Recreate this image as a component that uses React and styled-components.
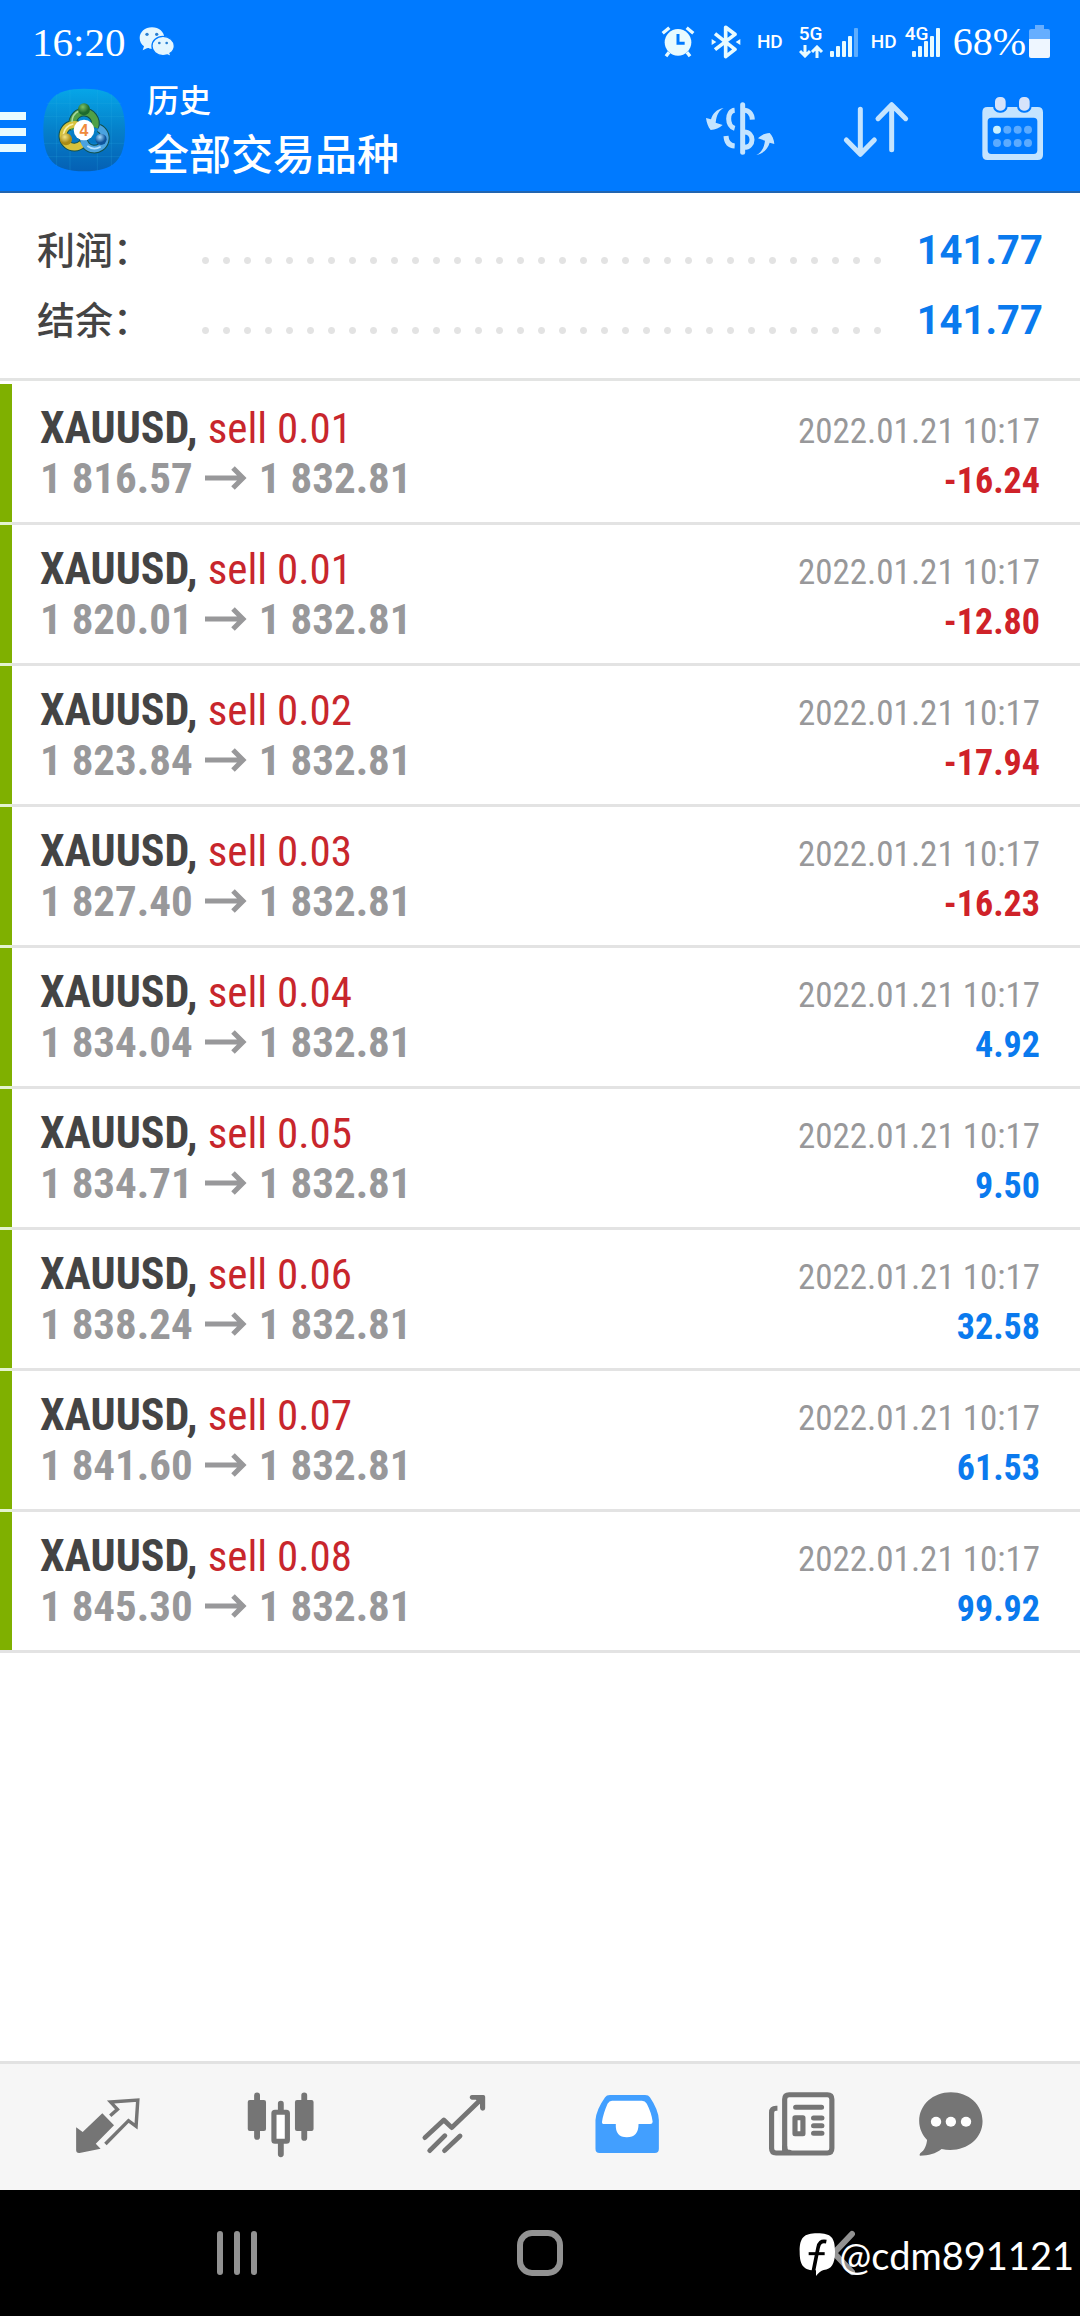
import React from "react";
import styled, { createGlobalStyle } from "styled-components";

const condensed = `"Roboto Condensed", "Liberation Sans Narrow", Roboto, sans-serif`;
const cjk = `Roboto, "Noto Sans CJK SC", sans-serif`;

const GlobalStyle = createGlobalStyle`
  *, *::before, *::after { box-sizing: border-box; }
  body { margin: 0; background: #fff; font-family: ${cjk}; }
  h1, p, ul, dl, dd { margin: 0; padding: 0; }
  ul { list-style: none; }
  button { border: 0; padding: 0; background: none; font: inherit; color: inherit; cursor: pointer; }
  svg { display: block; flex: none; }
`;

const Screen = styled.div`
  display: flex;
  flex-direction: column;
  min-height: 100vh;
`;

const Header = styled.header`
  background: #007aff;
  border-bottom: 2px solid #2265b0;
  color: #fff;
`;

const StatusBar = styled.div`
  display: flex;
  align-items: center;
  justify-content: space-between;
  height: 69px;
  padding: 14px 30px 0 32px;
`;

const StatusGroup = styled.div`
  display: flex;
  align-items: center;
  gap: ${(p) => p.$gap}px;
`;

const StatusText = styled.span`
  font-family: "Liberation Serif", serif;
  font-size: ${(p) => p.$size}px;
  line-height: 48px;
`;

const Tag = styled.span`
  font-size: 19px;
  font-weight: 500;
  line-height: 20px;
`;

const Network = styled.span`
  position: relative;
  display: flex;
  align-items: flex-end;
  height: 32px;
  padding-left: ${(p) => p.$inset}px;
`;

const NetworkLabel = styled.span`
  position: absolute;
  top: 0;
  left: 0;
  font-size: 19px;
  font-weight: 500;
  line-height: 16px;
`;

const AppBar = styled.div`
  display: flex;
  align-items: center;
  height: 122px;
`;

const MenuButton = styled.button`
  display: flex;
  flex-direction: column;
  gap: 8px;
  width: 42px;
  padding-top: 4px;
`;

const MenuLine = styled.span`
  width: 26px;
  height: 8px;
  background: #e8fbff;
`;

const Titles = styled.div`
  flex: 1;
  margin-left: 21px;
  padding-top: 4px;
`;

const Caption = styled.p`
  font-size: 32px;
  font-weight: 500;
  line-height: 48px;
`;

const Title = styled.h1`
  font-size: 42px;
  font-weight: 500;
  line-height: 62px;
`;

const ActionButton = styled.button`
  display: flex;
  justify-content: center;
  width: 136px;
`;

const Summary = styled.dl`
  padding: 23px 37px 22px;
  border-bottom: 3px solid #e3e4e3;
`;

const SummaryRow = styled.div`
  display: flex;
  align-items: center;
  height: 70px;
`;

const SummaryLabel = styled.dt`
  flex: 1;
  display: flex;
  align-items: center;
  color: #444;
  font-size: 38px;
  font-weight: 500;
  line-height: 56px;

  &::after {
    content: "";
    flex: 1;
    height: 25px;
    background: radial-gradient(circle, #e3e3e3 3px, transparent 4px) left bottom / 21px 7px;
    background-repeat: round no-repeat;
  }
`;

const LabelText = styled.span`
  width: 158px;
`;

const SummaryValue = styled.dd`
  width: 155px;
  color: #0a7aee;
  font-size: 40px;
  font-weight: 700;
  line-height: 56px;
  text-align: right;
`;

const Deals = styled.ul`
  flex: 1;
  padding-top: 3px;
`;

const Deal = styled.li`
  display: flex;
  background: #e4f3cf;

  &:last-child { background: #e3e3e3; }
`;

const DealMark = styled.span`
  width: 12px;
  margin-bottom: 3px;
  background: #7fb000;
`;

const DealBody = styled.div`
  flex: 1;
  padding: 19px 40px 19px 28px;
  border-bottom: 3px solid #e3e3e3;
  background: #fff;
  font-family: ${condensed};
`;

const DealLine = styled.div`
  display: flex;
  align-items: baseline;
  justify-content: space-between;
  height: 50px;
  line-height: 50px;
`;

const Symbol = styled.span`
  color: #444;
  font-size: 44px;
  font-weight: 700;
`;

const Side = styled.span`
  color: #c8262c;
  font-size: 43px;
  font-weight: 400;
`;

const Prices = styled.span`
  display: flex;
  align-items: center;
  gap: 12px;
  color: #98989a;
  font-size: 43px;
  font-weight: 700;
`;

const Time = styled.time`
  color: #98989a;
  font-size: 35px;
`;

const Profit = styled.span`
  color: ${(p) => (p.$loss ? "#cf2229" : "#0a7aee")};
  font-size: 36px;
  font-weight: 700;
`;

const TabBar = styled.nav`
  display: grid;
  grid-template-columns: repeat(5, 173fr) 128fr;
  height: 129px;
  padding: 0 66px 0 21px;
  border-top: 3px solid #e2e2e2;
  background: #f6f6f6;
`;

const TabButton = styled.button`
  display: flex;
  align-items: center;
  justify-content: center;
  color: ${(p) => (p.$active ? "#429fff" : "#757575")};
`;

const SystemBar = styled.footer`
  position: relative;
  display: grid;
  grid-template-columns: repeat(3, 1fr);
  height: 126px;
  padding: 0 86px;
  background: #000;
  color: #929292;
`;

const SystemButton = styled.button`
  display: flex;
  align-items: center;
  justify-content: center;
`;

const Watermark = styled.div`
  position: absolute;
  right: 6px;
  bottom: 37px;
  display: flex;
  align-items: center;
  gap: 4px;
  color: #fff;
  font-family: Lato, sans-serif;
  font-size: 38px;
  line-height: 48px;
`;

const WeChatIcon = () => (
  <svg width="36" height="32" viewBox="416 74 108 96" fill="#e4f6ff">
    <path d="M455 78c-21 0-37 14-37 32 0 10 5 19 13 25l-4 12 14-7c4 2 9 2 14 2 21 0 37-14 37-32s-16-32-37-32z" />
    <path stroke="#007aff" strokeWidth="4" d="M488 105c-19 0-33 13-33 29s14 29 33 29c5 0 9-1 13-2l12 5-4-10c8-5 13-13 13-22 0-16-15-29-34-29z" />
    <g fill="#2a7fd0">
      <circle cx="440" cy="99" r="5" /><circle cx="469" cy="99" r="5" />
      <circle cx="477" cy="125" r="4" /><circle cx="499" cy="125" r="4" />
    </g>
  </svg>
);

const AlarmIcon = () => (
  <svg width="34" height="34" viewBox="60 71 102 102" stroke="#e8fbff" fill="none">
    <circle cx="111" cy="123" r="40" fill="#e8fbff" stroke="none" />
    <path strokeWidth="10" d="M65 96l20-17M137 79l20 17M84 153l-9 12M138 153l9 12" />
    <path stroke="#007aff" strokeWidth="9" d="M111 98v28h20" />
  </svg>
);

const BluetoothIcon = () => (
  <svg width="30" height="34" viewBox="205 71 90 102" stroke="#e8fbff" strokeWidth="11" fill="none" strokeLinejoin="round">
    <path d="M217 97l60 47-28 22V78l28 21-60 46" />
    <path fill="#e8fbff" stroke="none" d="M207 113l14 9-14 9zM293 113l-14 9 14 9z" />
  </svg>
);

const SignalBars = ({ faded }) => (
  <svg width="29" height="30" viewBox="0 0 29 30" fill="#e8fbff">
    <rect x="0" y="23" width="4" height="6" rx="1" />
    <rect x="6" y="18" width="4" height="11" rx="1" />
    <rect x="12" y="13" width="4" height="16" rx="1" />
    <rect x="18" y="8" width="4" height="21" rx="1" />
    <rect x="24" y="0" width="4" height="29" rx="1" opacity={faded ? 0.4 : 1} />
  </svg>
);

const DataArrows = () => (
  <svg width="31" height="13" viewBox="0 0 31 13" stroke="#e8fbff" strokeWidth="3" fill="none">
    <path d="M6 0v11M1 6l5 5 5-5M18 13V2M13 7l5-5 5 5" />
  </svg>
);

const BatteryIcon = () => (
  <svg width="21" height="33" viewBox="0 0 21 33">
    <path fill="#66aeff" d="M6 0h9v4h4a2 2 0 0 1 2 2v9H0V6a2 2 0 0 1 2-2h4z" />
    <path fill="#eef6ff" d="M0 14h21v17a2 2 0 0 1-2 2H2a2 2 0 0 1-2-2z" />
  </svg>
);

const AppLogo = () => (
  <svg width="84" height="84" viewBox="126 264 252 252">
    <defs>
      <linearGradient id="tile" x1="0" y1="0" x2="0" y2="1">
        <stop offset="0" stopColor="#06a6e8" /><stop offset=".5" stopColor="#0580ca" /><stop offset="1" stopColor="#0560b4" />
      </linearGradient>
      <radialGradient id="green" cx=".4" cy=".3"><stop offset="0" stopColor="#7cc065" /><stop offset="1" stopColor="#1d6b2e" /></radialGradient>
      <radialGradient id="gold" cx=".4" cy=".3"><stop offset="0" stopColor="#f5e684" /><stop offset="1" stopColor="#a88a14" /></radialGradient>
      <radialGradient id="azure" cx=".4" cy=".3"><stop offset="0" stopColor="#a5dcff" /><stop offset="1" stopColor="#0f559c" /></radialGradient>
    </defs>
    <path fill="url(#tile)" d="M252 266c90 0 123 34 123 124s-33 124-123 124-122-34-122-124 32-124 122-124z" />
    <path stroke="#2fb4e6" strokeOpacity=".3" strokeWidth="2" d="M170 282v216M210 268v244M292 268v244M334 282v216M140 310h224M132 350h240M132 430h240M140 470h224" />
    <g fill="none">
      <path stroke="#12514d" strokeWidth="26" d="M222 386a34 34 0 1 1 62-4M236 376a34 34 0 1 0 10 56M296 384a33 33 0 1 1-46 32" />
      <path stroke="#4fa046" strokeWidth="20" d="M222 386a34 34 0 1 1 62-4" />
      <path stroke="#d6c23c" strokeWidth="20" d="M236 376a34 34 0 1 0 10 56" />
      <path stroke="#4aa3e0" strokeWidth="20" d="M296 384a33 33 0 1 1-46 32" />
      <path stroke="#a9d79c" strokeWidth="5" d="M216 366a37 37 0 0 1 22-34" />
      <path stroke="#f7efa8" strokeWidth="5" d="M190 404a36 36 0 0 1 30-32" />
      <path stroke="#b4e0ff" strokeWidth="5" d="M262 438a36 36 0 0 0 40 2" />
    </g>
    <circle cx="252" cy="328" r="18" fill="url(#green)" />
    <circle cx="198" cy="418" r="18" fill="url(#gold)" />
    <circle cx="303" cy="418" r="17" fill="url(#azure)" />
    <circle cx="252" cy="390" r="31" fill="#fff" />
    <text x="252" y="407" textAnchor="middle" fontFamily="Liberation Sans, sans-serif" fontSize="48" fontWeight="700" fill="#f08a3c">4</text>
  </svg>
);

const ExchangeIcon = () => (
  <svg width="72" height="72" viewBox="192 282 216 216" fill="none" stroke="#c4e4ff" strokeWidth="15">
    <path strokeLinecap="round" d="M308 314v143" />
    <path d="M308 331c18-2 28 10 29 28M284 331c-24 2-24 48 0 54M312 396c32 0 32 46 0 46M258 408c1 18 10 29 26 30" />
    <path fill="#c4e4ff" stroke="none" d="M251 324c-14 7-21 20-24 44l21 7c-10 9-22 14-36 15-8-9-12-22-14-36l15 4c5-18 17-30 38-34zM349 465c15-7 23-21 26-43l-21-7c10-10 20-15 35-16 8 9 13 19 14 33l-14-4c-5 18-19 33-40 37z" />
  </svg>
);

const SortIcon = () => (
  <svg width="72" height="72" viewBox="600 282 216 216" fill="none" stroke="#c4e4ff" strokeWidth="15" strokeLinecap="round" strokeLinejoin="round">
    <path d="M661 328v133M619 420l42 43 42-43M755 449V315M714 356l41-42 42 42" />
  </svg>
);

const CalendarIcon = () => (
  <svg width="72" height="72" viewBox="1008 282 216 216">
    <path fill="#c4e4ff" fillRule="evenodd" d="M1042 321h151q16 0 16 16v128q0 15-16 15h-151q-15 0-15-15V337q0-16 15-16zm12 32q-11 0-11 11v87q0 11 11 11h127q11 0 11-11v-87q0-11-11-11z" />
    <g fill="#d6e3fa" stroke="#007aff" strokeWidth="6">
      <rect x="1062" y="288" width="38" height="47" rx="17" />
      <rect x="1134" y="288" width="38" height="47" rx="17" />
    </g>
    <g fill="#5cabff">
      {[1071, 1102, 1133, 1164].map((x) => (
        <React.Fragment key={x}>
          <circle cx={x} cy="389" r="12" fill={x === 1071 ? "#c8f0ff" : undefined} />
          <circle cx={x} cy="429" r="12" />
        </React.Fragment>
      ))}
    </g>
  </svg>
);

const PriceArrow = () => (
  <svg width="42" height="24" viewBox="0 0 42 24" fill="none" stroke="currentColor" strokeWidth="5">
    <path d="M0 12h39M28 2l10 10-10 10" />
  </svg>
);

const TabIcon = ({ x, children }) => (
  <svg width="72" height="72" viewBox={`${x} 123 209 216`} preserveAspectRatio="none" fill="currentColor" stroke="currentColor" strokeWidth="0" strokeLinejoin="round" strokeLinecap="round">
    {children}
  </svg>
);

const tabs = [
  {
    name: "行情",
    icon: (
      <TabIcon x={208}>
        <path d="M296 190l34 36-53 55 14 15-61 13q-10 1-10-9v-68l19 14z" />
        <path fill="none" strokeWidth="10" strokeLinecap="butt" strokeLinejoin="miter" d="M319 197l21-19-20-22 79-6-5 79-22-17-67 70" />
      </TabIcon>
    ),
  },
  {
    name: "图表",
    icon: (
      <TabIcon x={710}>
        <path strokeWidth="17" d="M745 136v125M882 136v128M814 161v20M814 280v33" />
        <rect x="718" y="150" width="53" height="93" rx="6" />
        <rect x="855" y="150" width="54" height="93" rx="6" />
        <rect x="794" y="187" width="39" height="87" rx="3" fill="#fff" strokeWidth="15" />
      </TabIcon>
    ),
  },
  {
    name: "交易",
    icon: (
      <TabIcon x={1212}>
        <path fill="none" strokeWidth="14" d="M1232 263l55-53 23 23 86-86M1246 302l44-45M1289 302l45-44" />
        <path d="M1368 135h34q5 0 5 5v35q0 7-7 7t-8-8v-12l-12-13h-12q-6-1-6-7t6-7z" />
      </TabIcon>
    ),
  },
  {
    name: "历史",
    active: true,
    icon: (
      <TabIcon x={148}>
        <path d="M203 135h102q10 0 14 7 25 38 26 68v86q0 13-12 13H173q-12 0-12-13v-86q3-32 28-68 4-7 14-7z" />
        <path fill="#fff" d="M209 152h87q9 0 14 9 14 28 17 54 0 7-7 7h-34q0 40-34 40t-32-40h-34q-7 0-6-7 3-23 16-54 5-9 13-9z" />
      </TabIcon>
    ),
  },
  {
    name: "新闻",
    icon: (
      <TabIcon x={650}>
        <path fill="#fafafa" strokeWidth="15" d="M689 175h-4q-13 0-13 13v107q0 14 13 14h25V148q0-14 13-14h111q13 0 13 14v147q0 14-13 14H704" strokeLinecap="butt" />
        <path fill="none" strokeWidth="15" d="M710 290q0 17 14 17M742 172h75M794 204h24M794 227h24M794 250h24" />
        <rect x="740" y="203" width="23" height="48" fill="#fff" strokeWidth="15" />
      </TabIcon>
    ),
  },
  {
    name: "消息",
    icon: (
      <TabIcon x={1086}>
        <path d="M1193 127c52 0 92 38 92 86 0 60-58 98-119 84-18 14-36 20-63 20q-2-3 1-7c13-9 18-24 20-40-14-15-23-35-23-57 0-48 40-86 92-86z" />
        <g fill="#fff"><circle cx="1150" cy="215" r="15" /><circle cx="1193" cy="215" r="15" /><circle cx="1237" cy="215" r="15" /></g>
      </TabIcon>
    ),
  },
];

const deals = [
  ["0.01", "1 816.57", "-16.24"],
  ["0.01", "1 820.01", "-12.80"],
  ["0.02", "1 823.84", "-17.94"],
  ["0.03", "1 827.40", "-16.23"],
  ["0.04", "1 834.04", "4.92"],
  ["0.05", "1 834.71", "9.50"],
  ["0.06", "1 838.24", "32.58"],
  ["0.07", "1 841.60", "61.53"],
  ["0.08", "1 845.30", "99.92"],
];

const totals = [
  ["利润：", "141.77"],
  ["结余：", "141.77"],
];

export default function App() {
  return (
    <Screen>
      <GlobalStyle />
      <Header>
        <StatusBar>
          <StatusGroup $gap={14}>
            <StatusText $size={41}>16:20</StatusText>
            <WeChatIcon />
          </StatusGroup>
          <StatusGroup $gap={16}>
            <StatusGroup $gap={16}>
              <AlarmIcon />
              <BluetoothIcon />
              <Tag>HD</Tag>
            </StatusGroup>
            <StatusGroup $gap={12}>
              <Network $inset={0}>
                <NetworkLabel>5G</NetworkLabel>
                <DataArrows />
                <SignalBars faded />
              </Network>
              <StatusGroup $gap={8}>
                <Tag>HD</Tag>
                <Network $inset={7}>
                  <NetworkLabel>4G</NetworkLabel>
                  <SignalBars />
                </Network>
              </StatusGroup>
              <StatusGroup $gap={3}>
                <StatusText $size={40}>68%</StatusText>
                <BatteryIcon />
              </StatusGroup>
            </StatusGroup>
          </StatusGroup>
        </StatusBar>
        <AppBar>
          <MenuButton aria-label="菜单">
            <MenuLine />
            <MenuLine />
            <MenuLine />
          </MenuButton>
          <AppLogo />
          <Titles>
            <Caption>历史</Caption>
            <Title>全部交易品种</Title>
          </Titles>
          <ActionButton aria-label="交易品种"><ExchangeIcon /></ActionButton>
          <ActionButton aria-label="排序"><SortIcon /></ActionButton>
          <ActionButton aria-label="日期"><CalendarIcon /></ActionButton>
        </AppBar>
      </Header>

      <Summary>
        {totals.map(([label, value]) => (
          <SummaryRow key={label}>
            <SummaryLabel><LabelText>{label}</LabelText></SummaryLabel>
            <SummaryValue>{value}</SummaryValue>
          </SummaryRow>
        ))}
      </Summary>

      <Deals>
        {deals.map(([volume, open, profit]) => (
          <Deal key={open}>
            <DealMark />
            <DealBody>
              <DealLine>
                <Symbol>XAUUSD, <Side>sell {volume}</Side></Symbol>
                <Time>2022.01.21 10:17</Time>
              </DealLine>
              <DealLine>
                <Prices><span>{open}</span><PriceArrow /><span>1 832.81</span></Prices>
                <Profit $loss={profit.startsWith("-")}>{profit}</Profit>
              </DealLine>
            </DealBody>
          </Deal>
        ))}
      </Deals>

      <TabBar>
        {tabs.map((tab) => (
          <TabButton key={tab.name} aria-label={tab.name} $active={tab.active}>{tab.icon}</TabButton>
        ))}
      </TabBar>

      <SystemBar>
        <SystemButton aria-label="最近任务">
          <svg width="42" height="46" viewBox="0 0 42 46" stroke="currentColor" strokeWidth="6" strokeLinecap="round">
            <path d="M4 4v38M21 4v38M38 4v38" />
          </svg>
        </SystemButton>
        <SystemButton aria-label="主屏幕">
          <svg width="46" height="46" viewBox="0 0 46 46" stroke="currentColor" strokeWidth="6" fill="none">
            <rect x="3" y="3" width="40" height="40" rx="12" />
          </svg>
        </SystemButton>
        <SystemButton aria-label="返回">
          <svg width="24" height="46" viewBox="0 0 24 46" stroke="currentColor" strokeWidth="6" fill="none" strokeLinecap="round">
            <path d="M21 4L3 23l18 19" />
          </svg>
        </SystemButton>
        <Watermark>
          <svg width="37" height="44" viewBox="753 560 107 132">
            <path fill="#fff" d="M806 561c42 0 53 13 53 55 0 38-11 52-34 55-8 2-15 8-23 18v-17c-37 0-49-14-49-56s12-55 53-55z" />
            <path fill="none" stroke="#000" strokeWidth="11" d="M833 586c-16-3-22 3-25 19l-16 80" />
            <path fill="none" stroke="#000" strokeWidth="9" d="M780 622h48" />
          </svg>
          <span>@cdm891121</span>
        </Watermark>
      </SystemBar>
    </Screen>
  );
}
